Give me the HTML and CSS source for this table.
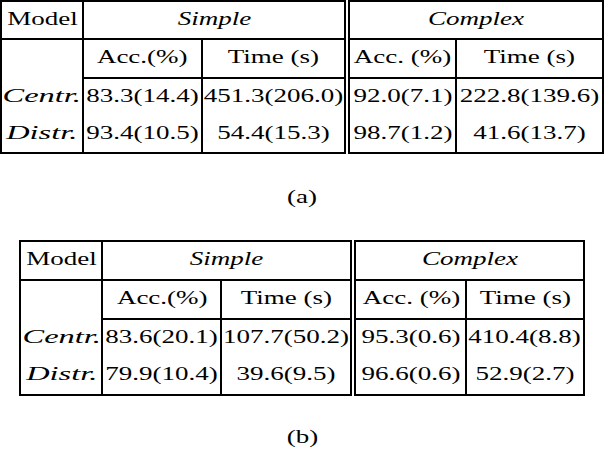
FILE: index.html
```html
<!DOCTYPE html>
<html lang="en">
<head>
    <meta charset="UTF-8">
    <meta name="viewport" content="width=device-width, initial-scale=1.0">
    <title>Centralized vs Distributed Results</title>
    <link rel="stylesheet" href="styles.css">
</head>
<body>
    <!-- Table (a) -->
    <div class="figure figure-a">
        <table class="results">
            <colgroup>
                <col class="c-model">
                <col class="c-acc">
                <col class="c-time">
                <col class="c-acc2">
                <col class="c-time2">
            </colgroup>
            <tr>
                <td><span class="t">Model</span></td>
                <td colspan="2"><span class="t it">Simple</span></td>
                <td colspan="2" class="split"><span class="t it">Complex</span></td>
            </tr>
            <tr class="sub">
                <td class="blank"></td>
                <td><span class="t">Acc.(%)</span></td>
                <td><span class="t">Time (s)</span></td>
                <td class="split"><span class="t">Acc. (%)</span></td>
                <td><span class="t">Time (s)</span></td>
            </tr>
            <tr class="first">
                <td><span class="t it label">Centr.</span></td>
                <td><span class="t">83.3(14.4)</span></td>
                <td><span class="t">451.3(206.0)</span></td>
                <td class="split"><span class="t">92.0(7.1)</span></td>
                <td><span class="t">222.8(139.6)</span></td>
            </tr>
            <tr>
                <td><span class="t it label">Distr.</span></td>
                <td><span class="t">93.4(10.5)</span></td>
                <td><span class="t">54.4(15.3)</span></td>
                <td class="split"><span class="t">98.7(1.2)</span></td>
                <td><span class="t">41.6(13.7)</span></td>
            </tr>
        </table>
        <div class="caption"><span class="t">(a)</span></div>
    </div>

    <!-- Table (b) -->
    <div class="figure figure-b">
        <table class="results">
            <colgroup>
                <col class="c-model">
                <col class="c-acc">
                <col class="c-time">
                <col class="c-acc2">
                <col class="c-time2">
            </colgroup>
            <tr>
                <td><span class="t">Model</span></td>
                <td colspan="2"><span class="t it">Simple</span></td>
                <td colspan="2" class="split"><span class="t it">Complex</span></td>
            </tr>
            <tr class="sub">
                <td class="blank"></td>
                <td><span class="t">Acc.(%)</span></td>
                <td><span class="t">Time (s)</span></td>
                <td class="split"><span class="t">Acc. (%)</span></td>
                <td><span class="t">Time (s)</span></td>
            </tr>
            <tr class="first">
                <td><span class="t it label">Centr.</span></td>
                <td><span class="t">83.6(20.1)</span></td>
                <td><span class="t">107.7(50.2)</span></td>
                <td class="split"><span class="t">95.3(0.6)</span></td>
                <td><span class="t">410.4(8.8)</span></td>
            </tr>
            <tr>
                <td><span class="t it label">Distr.</span></td>
                <td><span class="t">79.9(10.4)</span></td>
                <td><span class="t">39.6(9.5)</span></td>
                <td class="split"><span class="t">96.6(0.6)</span></td>
                <td><span class="t">52.9(2.7)</span></td>
            </tr>
        </table>
        <div class="caption"><span class="t">(b)</span></div>
    </div>
</body>
</html>
```

FILE: styles.css
```css
/* Page */
body {
    margin: 0;
    background-color: #fff;
    color: #000;
    font-family: "Liberation Serif", "Times New Roman", serif;
    font-size: 18px;
}

/* Result tables */
.results {
    border-collapse: collapse;
    table-layout: fixed;
    margin: 0 auto;
}

.results td {
    border: 2px solid #000;
    height: 34px;
    padding: 0 0 2px 0;
    text-align: center;
    vertical-align: middle;
    white-space: nowrap;
}

/* empty cell under "Model" has no line below it */
.results td.blank {
    border-bottom-style: hidden;
}

/* no rule between the two data rows */
.results tr.first td {
    border-bottom-style: hidden;
}

/* double rule between Simple and Complex */
.results td.split {
    border-left: 6px double #000;
}

/* the source figure is stretched sideways */
.t {
    display: inline-block;
    transform: scaleX(1.5);
}

.it {
    font-style: italic;
}

/* math italic row labels run wider */
.t.label {
    transform: scaleX(1.8);
}

.caption {
    text-align: center;
}

/* Table (a) */
.figure-a .results {
    width: 602px;
}

.figure-a .results tr.sub td,
.figure-a .results tr.first td {
    height: 35px;
}

.figure-a .c-model { width: 82px; }
.figure-a .c-acc { width: 119px; }
.figure-a .c-time { width: 145px; }
.figure-a .c-acc2 { width: 109px; }
.figure-a .c-time2 { width: 147px; }

.figure-a .caption {
    margin-top: 33px;
}

/* Table (b) */
.figure-b {
    margin-top: 32px;
}

.figure-b .results {
    width: 563px;
}

.figure-b .results td {
    height: 35px;
}

.figure-b .c-model { width: 82px; }
.figure-b .c-acc { width: 119px; }
.figure-b .c-time { width: 132px; }
.figure-b .c-acc2 { width: 113px; }
.figure-b .c-time2 { width: 117px; }

.figure-b .caption {
    margin-top: 31px;
}
```
